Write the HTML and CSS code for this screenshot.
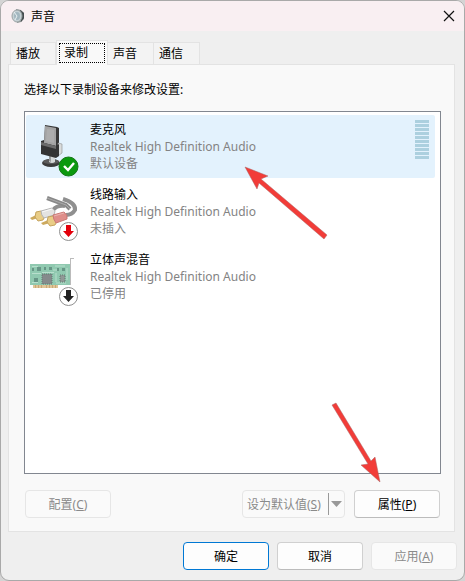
FILE: index.html
```html
<!DOCTYPE html>
<html lang="zh-CN">
<head>
  <meta charset="UTF-8">
  <meta name="viewport" content="width=device-width, initial-scale=1.0">
  <link rel="stylesheet" href="styles.css">
  <title>声音</title>
</head>
<body>
  <div class="window">
    <header class="titlebar">
      <svg class="app-icon" width="14" height="16" viewBox="0 0 14 16">
        <path d="M5 1l5 1 3 3v6l-3 3-4 1z" fill="#8a9090"/>
        <path d="M9 2l4 3v5l-3 4z" fill="#454c4e"/>
        <ellipse cx="6" cy="8" rx="5" ry="6" fill="#c5d0d4" stroke="#9ba3a5"/>
        <ellipse cx="6" cy="8" rx="3" ry="4" fill="#a3b7c0"/>
        <path d="M3 4l3 4-2 4" stroke="#e9f0f2" fill="none"/>
      </svg>
      <h1>声音</h1>
      <button class="close" type="button" aria-label="关闭">
        <svg width="12" height="12" viewBox="0 0 12 12"><path d="M1 1l10 10M11 1L1 11" stroke="#111" stroke-width="1.2"/></svg>
      </button>
    </header>

    <div class="tabs" role="tablist">
      <button class="tab" type="button" role="tab">播放</button>
      <button class="tab active" type="button" role="tab" aria-selected="true"><span>录制</span></button>
      <button class="tab" type="button" role="tab">声音</button>
      <button class="tab" type="button" role="tab">通信</button>
    </div>

    <main class="panel">
      <p class="hint">选择以下录制设备来修改设置:</p>
      <ul class="devices">
        <li class="device selected">
          <svg class="icon" width="52" height="58" viewBox="0 0 52 58">
            <ellipse cx="24" cy="43" rx="9" ry="4" fill="#3c3c3c"/>
            <ellipse cx="24" cy="41.500" rx="8" ry="2.500" fill="#5b5b5b"/>
            <path d="M22 35h6v7q-3 2-6 0z" fill="#d5d8d8"/>
            <path d="M22 35h2v7l-2-1z" fill="#9a9d9d"/>
            <path d="M18 5l12 2 2 1v19l-15-3z" fill="#383838"/>
            <path d="M18 6l11 2v18l-12-3z" fill="#a3a3a3"/>
            <path d="M20 9l7 1v13l-8-2z" fill="#adadad"/>
            <path d="M31 23l4 1v9l-4 3z" fill="#d9dcdc" stroke="#8b8b8b" stroke-width=".6"/>
            <path d="M14 21l3-1v3l12 3 3-2v12l-3 2-15-4z" fill="#343434"/>
            <path d="M14 22l15 4v3l-15-4z" fill="#6c6c6c"/>
            <circle cx="41.500" cy="46.500" r="9.500" fill="#0b990e" stroke="#137616"/>
            <path d="M37 46l4 4 6-7" fill="none" stroke="#fff" stroke-width="2.400"/>
          </svg>
          <div class="info">
            <h2>麦克风</h2>
            <p>Realtek High Definition Audio</p>
            <p>默认设备</p>
          </div>
          <div class="meter"></div>
        </li>
        <li class="device">
          <svg class="icon" width="52" height="58" viewBox="0 0 52 58">
            <path d="M26 25q4-5 12-4" fill="none" stroke="#8f8f8f" stroke-width="4"/>
            <path d="M36 14q13 4 12 11-3 5-9 5" fill="none" stroke="#8f8f8f" stroke-width="4"/>
            <path d="M20 13l19 7 4 4" fill="none" stroke="#888" stroke-width="4"/>
            <path d="M20 13l19 7 4 4" fill="none" stroke="#aaa" stroke-width="1"/>
            <path d="M3 33l6-3 2 3-6 2z" fill="#cdaa5e"/>
            <path d="M9 27l5-1 4 5-2 4-5 1-3-4z" fill="#e9cd87" stroke="#c5a45e"/>
            <path d="M14 26l11-3 3 3-1 4-10 3q-3-3-3-7z" fill="#e4e3e1" stroke="#b5b5b5"/>
            <path d="M15 27l10-3" stroke="#f8f8f8"/>
            <path d="M14 38l7-3 2 3-7 2z" fill="#cdaa5e"/>
            <path d="M21 32l5-1 4 5-2 4-5 1-3-4z" fill="#e9cd87" stroke="#c5a45e"/>
            <path d="M26 30l11-3q4 3 3 7l-11 4q-3-4-3-8z" fill="#df8e8a" stroke="#cb7975"/>
            <path d="M27 31l10-3" stroke="#eab5b1"/>
            <circle cx="41.500" cy="46.500" r="9" fill="#fff" stroke="#8f8f8f"/>
            <path d="M39 40h5v6h3l-5.500 6-5.500-6h3z" fill="#e3000b"/>
          </svg>
          <div class="info">
            <h2>线路输入</h2>
            <p>Realtek High Definition Audio</p>
            <p>未插入</p>
          </div>
        </li>
        <li class="device">
          <svg class="icon" width="52" height="58" viewBox="0 0 52 58">
            <path d="M43 8.500h4M43.500 8v27" stroke="#bbb" fill="none"/>
            <path d="M3 14h40v21H3z" fill="#90c9b0"/>
            <path d="M6 35h25v3H6z" fill="#e0c597"/>
            <path d="M8.500 35v3M11.500 35v3M14.500 35v3M19.500 35v3M22.500 35v3M25.500 35v3M28.500 35v3" stroke="#c9a876"/>
            <path d="M5 16.500h6M28 16h10M5 23.500h9M5 32.500h6M29 33h10M26 20h4M40 18v12M15 22.500h12M29 23v9" stroke="#b8dfcd"/>
            <path d="M10 17h4v4h-4zM17 17h2v3h-2zM22 17h3v3h-3zM30 18h2v3h-2zM35 18h3v3h-3zM7 28h4v4H7zM5 18h2v3H5z" fill="#679686"/>
            <path d="M15 24h10v10H15z" fill="#858b8c" stroke="#637b72" stroke-dasharray="1 1"/>
            <path d="M33 25h5v7h-5z" fill="#909896" stroke="#607b70" stroke-dasharray="1 1"/>
            <circle cx="41.500" cy="46.500" r="9" fill="#fff" stroke="#8f8f8f"/>
            <path d="M39 40h5v6h3l-5.500 6-5.500-6h3z" fill="#222"/>
          </svg>
          <div class="info">
            <h2>立体声混音</h2>
            <p>Realtek High Definition Audio</p>
            <p>已停用</p>
          </div>
        </li>
      </ul>
      <div class="actions">
        <button class="btn" type="button" disabled>配置(<u>C</u>)</button>
        <button class="btn split" type="button" disabled>
          <span>设为默认值(<u>S</u>)</span>
          <svg width="14" height="22" viewBox="0 0 14 22"><path d="M.5 0v22" stroke="#999"/><path d="M3 8h11l-5.500 6z" fill="#999"/></svg>
        </button>
        <button class="btn" type="button">属性(<u>P</u>)</button>
      </div>
    </main>

    <footer class="footer">
      <button class="btn primary" type="button">确定</button>
      <button class="btn" type="button">取消</button>
      <button class="btn" type="button" disabled>应用(<u>A</u>)</button>
    </footer>

    <svg class="arrow arrow-device" width="86" height="76" viewBox="0 0 86 76">
      <path d="M1 1l23 9-7 3 66 56-3 4L15 17l-2 6z" fill="#f23c38" stroke="#a66" stroke-width=".5"/>
    </svg>
    <svg class="arrow arrow-props" width="52" height="84" viewBox="0 0 52 84">
      <path d="M49 81L30 64l7-1L1 4l4-2 35 58 4-4z" fill="#f23c38" stroke="#a66" stroke-width=".5"/>
    </svg>
  </div>
</body>
</html>
```

FILE: styles.css
```css
* {
  box-sizing: border-box;
}

body {
  margin: 0;
  background: #d4d4d4;
  color: #000;
  font-family: "Noto Sans", "Noto Sans CJK SC", sans-serif;
  font-size: 12px;
  line-height: 17px;
}

h1, h2, p, ul {
  margin: 0;
  padding: 0;
  font-size: 12px;
  font-weight: normal;
}

button {
  font: inherit;
  color: inherit;
}

.window {
  position: relative;
  display: flex;
  flex-direction: column;
  min-height: 100vh;
  border: 1px solid #a9a9a9;
  border-radius: 9px;
  background: #efefef;
  overflow: hidden;
}

.titlebar {
  display: flex;
  align-items: center;
  height: 30px;
  padding: 0 9px 0 10px;
  background: #f9eff2;
}

.titlebar h1 {
  flex: 1;
  margin-left: 6px;
}

.close {
  display: flex;
  padding: 0;
  border: 0;
  background: none;
}

/* tabs */
.tabs {
  display: flex;
  align-items: flex-end;
  height: 33px;
  padding-left: 9px;
}

.tab {
  width: 46px;
  height: 22px;
  padding: 0 5px;
  border: 1px solid #e3e3e3;
  border-width: 1px 1px 0 0;
  background: #f3f3f3;
  text-align: left;
}

.tab:first-child {
  border-left-width: 1px;
}

.tab.active {
  width: 52px;
  height: 25px;
  margin-bottom: -1px;
  padding: 2px;
  border-left-width: 1px;
  background: #f9f9f9;
  z-index: 1;
}

.tab.active span {
  display: block;
  height: 20px;
  padding-left: 4px;
  border: 1px dotted #000;
  line-height: 17px;
}

.panel {
  flex: 1;
  display: flex;
  flex-direction: column;
  margin: 0 9px 0 7px;
  padding: 16px 13px 13px 15px;
  border: 1px solid #e3e3e3;
  background: #f9f9f9;
}

.devices {
  flex: 1;
  margin-top: 13px;
  padding: 3px 5px 3px 1px;
  border: 1px solid #828790;
  background: #fff;
  list-style: none;
}

.device {
  display: flex;
  height: 63px;
  margin-bottom: 2px;
  padding: 5px 6px 0 1px;
  border-radius: 2px;
}

.device.selected {
  background: #e3f2fd;
}

.icon {
  flex: none;
}

.info {
  flex: 1;
  margin-left: 11px;
  padding-top: 1px;
}

.info p {
  color: #838383;
}

.meter {
  width: 14px;
  height: 39px;
  background: repeating-linear-gradient(#acd0df 0 3px, transparent 3px 4px);
}

/* buttons */
.btn {
  width: 86px;
  height: 28px;
  padding: 0;
  border: 1px solid #d0d0d0;
  border-bottom-color: #bcbcbc;
  border-radius: 4px;
  background: #fdfdfd;
}

.btn:disabled {
  border-color: #e6e6e6;
  background: #fafafa;
  color: #8a8a8a;
}

.btn.primary {
  border-color: #0078d4;
}

.btn.split {
  display: flex;
  align-items: center;
  justify-content: space-between;
  width: 103px;
  padding: 0 2px 0 4px;
  margin-left: auto;
}

.actions {
  display: flex;
  gap: 9px;
  margin-top: 16px;
  padding: 0 1px;
}

.footer {
  display: flex;
  justify-content: flex-end;
  gap: 8px;
  padding: 10px 7px;
}

.arrow {
  position: absolute;
  pointer-events: none;
}

.arrow-device {
  left: 243px;
  top: 165px;
}

.arrow-props {
  left: 330px;
  top: 400px;
}
```
